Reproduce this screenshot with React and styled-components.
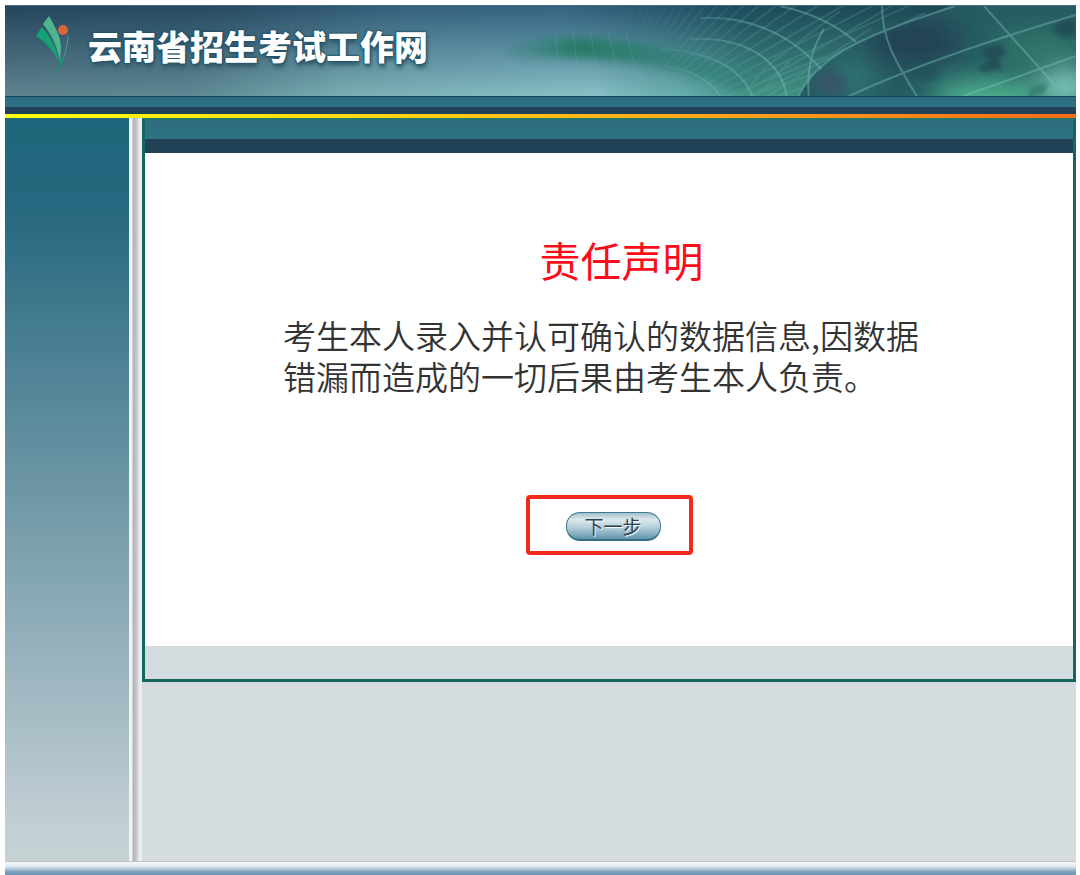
import React from 'react';
import styled, { createGlobalStyle } from 'styled-components';

const GlobalStyle = createGlobalStyle`
    * {
        box-sizing: border-box;
    }

    body {
        margin: 0;
        background: #ffffff;
        font-family: "Noto Sans CJK SC", sans-serif;
    }
`;

const Page = styled.div`
    display: flex;
    flex-direction: column;
    min-height: 100vh;
    padding: 5px 4px 0 5px;
`;

const Banner = styled.header`
    display: grid;
    align-items: center;
    height: 91px;
    overflow: hidden;
    border-top: 1px solid #47707f;
    background: #4c8496;
`;

const BannerArt = styled.svg`
    grid-area: 1 / 1;
    display: block;
    width: 100%;
    height: 91px;
`;

const Brand = styled.div`
    grid-area: 1 / 1;
    z-index: 1;
    display: flex;
    align-items: center;
    gap: 18px;
    padding-left: 30px;
    padding-bottom: 12px;
`;

const Logo = styled.svg`
    width: 35px;
    height: 62px;
`;

const SiteName = styled.h1`
    margin: 0;
    color: #ffffff;
    font-size: 34px;
    font-weight: 900;
    line-height: 48px;
    text-shadow: 0 0 2px #1d5069, 0 0 2px #1d5069, 0 0 3px #1d5069, 1px 4px 4px #35596a;
`;

const NavBar = styled.div`
    height: 18px;
    border-top: 1px solid #17455e;
    background: linear-gradient(#2b6c84 0, #2f6f82 10px, #1f4259 10px, #1f4259 100%);
`;

const Rainbow = styled.div`
    height: 4px;
    background: linear-gradient(90deg, #ffff10, #ffd814 33%, #ffa51a 66%, #f56a17);
`;

const Body = styled.div`
    display: flex;
    flex: 1;
    background: #d5dcdf;
`;

const Sidebar = styled.aside`
    width: 124px;
    background: linear-gradient(#1e667b, #26687f 12%, #c2ced4 95%, #c5d3d4);
`;

const Divider = styled.div`
    width: 13px;
    background: linear-gradient(90deg, #eef3f5 0, #eef3f5 3px, #b3b2b7 4px, #c2c1c6 7px, #f0f0f3 11px, #e6ecee 13px);
`;

const Panel = styled.main`
    flex: 1;
    align-self: flex-start;
    border: 3px solid #166660;
    border-top: 2px solid #23756f;
    background: #d5dcdf;
`;

const PanelBar = styled.div`
    height: 33px;
    background: linear-gradient(#306c80 0, #2c7381 19px, #214257 19px, #214257 100%);
`;

const PanelContent = styled.div`
    display: flex;
    flex-direction: column;
    align-items: center;
    padding: 74px 16px 91px;
    background: #ffffff;
`;

const PanelFooter = styled.div`
    height: 33px;
`;

const Statement = styled.section`
    width: 100%;
    max-width: 702px;
    padding-left: 25px;
    margin-bottom: 98px;
`;

const StatementTitle = styled.h2`
    margin: 0 0 24px;
    color: #fb0d1b;
    font-size: 41px;
    font-weight: 400;
    line-height: 64px;
    text-align: center;
`;

const StatementText = styled.p`
    margin: 0;
    color: #333333;
    font-size: 33px;
    font-weight: 350;
    line-height: 41px;
`;

const Highlight = styled.div`
    padding: 13px 28px 10px 36px;
    border: 4px solid #f3291c;
    border-radius: 4px;
`;

const NextButton = styled.button`
    display: block;
    width: 95px;
    height: 29px;
    padding: 0;
    border: 1px solid #3f7893;
    border-bottom: 2px solid #376f89;
    border-radius: 14px;
    background: linear-gradient(#a3c1cd, #dce8ec 25%, #b6cfd9 55%, #5f95aa);
    color: #30414c;
    font-family: inherit;
    font-size: 19px;
    line-height: 24px;
    text-shadow: 1px 1px 1px #ffffff;
    cursor: pointer;
`;

const Footer = styled.footer`
    height: 14px;
    border-top: 1px solid #bfc3c6;
    background: linear-gradient(#f3f7fa 0, #e4edf4 4px, #7c9fbb 10px, #6c94b2);
`;

const arcs = [
    'M780 5 Q826 15 856 41',
    'M700 17 C745 14 790 32 821 68',
    'M690 38 C740 36 781 55 787 97',
    'M660 48 C705 50 742 65 753 97',
    'M640 64 C680 62 706 74 722 97',
    'M650 76 C670 78 684 84 694 97',
];

const globeLines = [
    'M882 5 C882 38 895 60 918 97',
    'M845 97 C900 71 980 42 1076 14',
    'M958 97 C1000 82 1040 68 1076 55',
    'M984 5 L1054 83',
    'M798 97 C818 50 880 30 955 5',
];

// rays leave one point below the banner and fan out to the upper right
const rays = Array.from({ length: 26 }, (_, i) => {
    const angle = ((11 + i * 2.7) * Math.PI) / 180;
    return {
        x: Math.round(590 + Math.cos(angle) * 420),
        y: Math.round(150 - Math.sin(angle) * 420),
    };
});

const HeaderArt = () => (
    <BannerArt viewBox="5 5 1071 91" preserveAspectRatio="xMaxYMid slice" aria-hidden="true">
        <defs>
            <linearGradient id="skyTop">
                <stop offset="0" stopColor="#24465d" />
                <stop offset="0.2" stopColor="#284b62" />
                <stop offset="0.38" stopColor="#36617f" />
                <stop offset="0.52" stopColor="#336381" />
                <stop offset="0.68" stopColor="#1c4b5c" />
                <stop offset="1" stopColor="#20444f" />
            </linearGradient>
            <linearGradient id="skyBottom">
                <stop offset="0" stopColor="#5f8490" />
                <stop offset="0.17" stopColor="#5e8893" />
                <stop offset="0.32" stopColor="#7bb0b5" />
                <stop offset="0.55" stopColor="#8ac2c8" />
                <stop offset="0.63" stopColor="#68aead" />
                <stop offset="0.7" stopColor="#439184" />
                <stop offset="1" stopColor="#41907b" />
            </linearGradient>
            <linearGradient id="fade" x1="0" y1="0" x2="0" y2="1">
                <stop offset="0" stopColor="#000" />
                <stop offset="1" stopColor="#fff" />
            </linearGradient>
            <linearGradient id="sweep" gradientUnits="userSpaceOnUse" x1="600" y1="0" x2="780" y2="0">
                <stop offset="0" stopColor="#000" />
                <stop offset="1" stopColor="#fff" />
            </linearGradient>
            <linearGradient id="arcStroke" gradientUnits="userSpaceOnUse" x1="640" y1="0" x2="760" y2="0">
                <stop offset="0" stopColor="#7cc5c0" stopOpacity="0" />
                <stop offset="1" stopColor="#7cc5c0" />
            </linearGradient>
            <linearGradient id="band" gradientUnits="userSpaceOnUse" x1="500" y1="0" x2="760" y2="0">
                <stop offset="0" stopColor="#3b8484" stopOpacity="0.3" />
                <stop offset="0.3" stopColor="#267a66" />
                <stop offset="1" stopColor="#2b7a72" stopOpacity="0.4" />
            </linearGradient>
            <mask id="fadeMask">
                <rect x="5" y="5" width="1071" height="91" fill="url(#fade)" />
            </mask>
            <mask id="rayMask" maskUnits="userSpaceOnUse" x="5" y="5" width="1071" height="92">
                <path d="M5 5 H955 C880 30 818 50 798 97 H5 Z" fill="url(#sweep)" />
            </mask>
            <clipPath id="globeClip">
                <path d="M798 97 C818 50 880 30 955 5 H1076 V97 Z" />
            </clipPath>
            <filter id="soft" x="-50%" y="-50%" width="200%" height="200%">
                <feGaussianBlur stdDeviation="5" />
            </filter>
            <filter id="glow" x="-50%" y="-80%" width="200%" height="260%">
                <feGaussianBlur stdDeviation="14" />
            </filter>
            <filter id="land" x="-50%" y="-50%" width="200%" height="200%">
                <feGaussianBlur stdDeviation="2" />
            </filter>
        </defs>
        <rect x="5" y="5" width="1071" height="91" fill="url(#skyTop)" />
        <rect x="5" y="5" width="1071" height="91" fill="url(#skyBottom)" mask="url(#fadeMask)" />
        <path d="M506 46 C560 28 640 34 760 76 L740 92 C670 58 590 56 512 56 Z" fill="url(#band)" filter="url(#soft)" />
        <g fill="none" stroke="#5fae9f" strokeWidth="1" opacity="0.3">
            <path d="M555 32 L558 60 M573 31 L577 62 M590 30 L596 64 M608 30 L616 66 M626 30 L636 70" />
        </g>
        <g stroke="#6db9b3" strokeWidth="2" opacity="0.2" mask="url(#rayMask)">
            {rays.map((ray) => (
                <line key={`${ray.x}-${ray.y}`} x1="590" y1="150" x2={ray.x} y2={ray.y} />
            ))}
            <path d="M735 97 L900 0 M745 97 L925 12 M765 97 L870 28 M755 97 L790 60 M740 97 L766 66 L840 10" fill="none" />
        </g>
        <g clipPath="url(#globeClip)">
            <rect x="790" y="5" width="290" height="92" fill="#265c62" />
            <ellipse cx="855" cy="76" rx="20" ry="16" fill="#347f7c" filter="url(#glow)" />
            <ellipse cx="915" cy="40" rx="46" ry="24" fill="#233f52" filter="url(#glow)" />
            <ellipse cx="830" cy="82" rx="16" ry="12" fill="#34576a" filter="url(#soft)" />
            <ellipse cx="990" cy="98" rx="60" ry="20" fill="#50b58f" filter="url(#glow)" />
            <ellipse cx="1040" cy="48" rx="50" ry="16" fill="#327a6c" filter="url(#glow)" />
            <ellipse cx="1066" cy="86" rx="28" ry="18" fill="#8bd8c6" filter="url(#glow)" />
            <g fill="#234b55" opacity="0.85" filter="url(#land)">
                <path d="M986 46 L1002 43 L1006 52 L998 59 L1002 68 L984 71 L978 67 L990 60 L983 54 Z" />
                <path d="M1052 30 L1062 19 L1076 20 V36 L1064 36 Z" />
                <path d="M920 70 L934 68 L938 76 L927 80 L918 76 Z" opacity="0.7" />
                <path d="M1028 90 L1036 84 L1048 83 L1044 92 L1030 97 Z" fill="#327c6d" />
            </g>
        </g>
        <g fill="none" stroke="url(#arcStroke)" strokeWidth="2" opacity="0.4">
            {arcs.map((d) => (
                <path key={d} d={d} />
            ))}
            <path d="M809 97 Q805 58 824 28" />
        </g>
        <g fill="none" stroke="#7cc5c0" strokeWidth="2" opacity="0.4">
            {globeLines.map((d) => (
                <path key={d} d={d} />
            ))}
        </g>
    </BannerArt>
);

const LogoMark = () => (
    <Logo viewBox="0 0 35 62" aria-hidden="true">
        <path d="M8 9 L14 1 C20 12 25 20 26 31 L25 46 C22 31 17 20 8 9 Z" fill="#4db690" />
        <path d="M1 21 L7 12 C16 22 22 34 24 47 C18 36 11 27 1 21 Z" fill="#15a076" />
        <path d="M33 20 C32 37 28 49 18 61" fill="none" stroke="#4f9a8d" strokeWidth="1" />
        <path d="M25 41 C25 49 23 54 18 61 C25 55 28 49 29 43" fill="#248c72" />
        <circle cx="28" cy="15" r="5" fill="#d9633b" />
    </Logo>
);

const App = () => {

    return (
        <>
            <GlobalStyle />
            <Page>
                <Banner>
                    <HeaderArt />
                    <Brand>
                        <LogoMark />
                        <SiteName>云南省招生考试工作网</SiteName>
                    </Brand>
                </Banner>
                <NavBar />
                <Rainbow />
                <Body>
                    <Sidebar />
                    <Divider />
                    <Panel>
                        <PanelBar />
                        <PanelContent>
                            <Statement>
                                <StatementTitle>责任声明</StatementTitle>
                                <StatementText>
                                    考生本人录入并认可确认的数据信息,因数据
                                    <br />
                                    错漏而造成的一切后果由考生本人负责。
                                </StatementText>
                            </Statement>
                            <Highlight>
                                <NextButton type="button">下一步</NextButton>
                            </Highlight>
                        </PanelContent>
                        <PanelFooter />
                    </Panel>
                </Body>
                <Footer />
            </Page>
        </>
    )

}

export default App;
